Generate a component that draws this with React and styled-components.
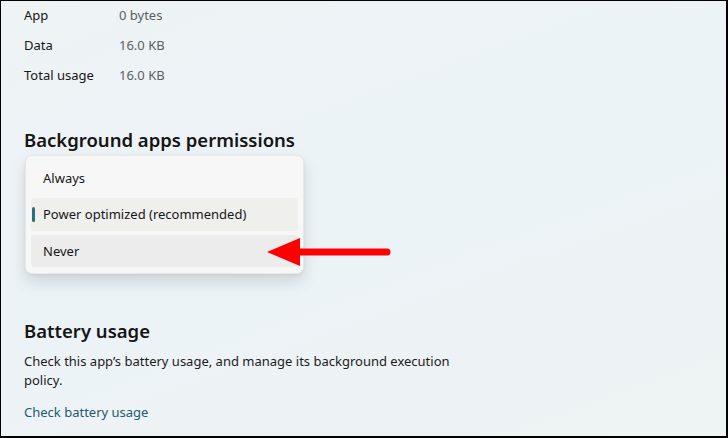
import React from "react";
import styled, { createGlobalStyle } from "styled-components";

const GlobalStyle = createGlobalStyle`
  html, body {
    margin: 0;
    padding: 0;
  }
  body {
    font-family: "Noto Sans", "Open Sans", sans-serif;
    -webkit-font-smoothing: antialiased;
  }
`;

const storage = [
  { label: "App", value: "0 bytes" },
  { label: "Data", value: "16.0 KB" },
  { label: "Total usage", value: "16.0 KB" },
];

const options = [
  { text: "Always" },
  { text: "Power optimized (recommended)", selected: true },
  { text: "Never", hover: true },
];

function App() {
  return (
    <>
      <GlobalStyle />
      <Frame>
        <StorageList>
          {storage.map((row) => (
            <StorageRow key={row.label}>
              <Label>{row.label}</Label>
              <Value>{row.value}</Value>
            </StorageRow>
          ))}
        </StorageList>

        <Heading $top={37}>Background apps permissions</Heading>
        <PermissionBody>
          <Menu>
            {options.map((o) => (
              <MenuItem key={o.text} $selected={o.selected} $hover={o.hover}>
                {o.selected && <Accent />}
                {o.text}
              </MenuItem>
            ))}
          </Menu>
          <Arrow width="128" height="32" viewBox="0 0 128 32">
            <polygon points="1,16 34,2 34,30" fill="#ff0000" />
            <line x1="32" y1="16" x2="121" y2="16" stroke="#ff0000" strokeWidth="7" strokeLinecap="round" />
          </Arrow>
        </PermissionBody>

        <Heading $top={0}>Battery usage</Heading>
        <Description>
          Check this app’s battery usage, and manage its background execution
          policy.
        </Description>
        <LinkText>Check battery usage</LinkText>
      </Frame>
    </>
  );
}

const Frame = styled.div`
  box-sizing: border-box;
  width: 728px;
  height: 438px;
  overflow: hidden;
  border-style: solid;
  border-color: #000;
  border-width: 1px 2px 2px 1px;
  padding: 0 0 0 23px;
  background: linear-gradient(160deg, #eef3f5 0%, #ecf3f7 45%, #eef3f3 100%);
  color: #1b1b1b;
  display: flex;
  flex-direction: column;
`;

const StorageList = styled.div`
  display: flex;
  flex-direction: column;
  margin-top: -1px;
`;

const StorageRow = styled.div`
  display: flex;
  align-items: center;
  height: 30px;
  font-size: 13px;
`;

const Label = styled.span`
  width: 95px;
  color: #161616;
`;

const Value = styled.span`
  color: #5c5f61;
`;

const Heading = styled.h2`
  margin: ${(p) => p.$top}px 0 0 0;
  font-size: 18.5px;
  font-weight: 600;
  line-height: 26px;
  color: #151515;
`;

const PermissionBody = styled.div`
  position: relative;
  height: 165px;
`;

const Menu = styled.div`
  position: absolute;
  top: 2px;
  left: 1px;
  box-sizing: border-box;
  width: 279px;
  height: 119px;
  padding: 6px 5px;
  background: #f6f7f6;
  border: 1px solid rgba(0, 0, 0, 0.06);
  border-radius: 7px;
  box-shadow: 0 8px 16px rgba(0, 0, 0, 0.13), 0 1px 3px rgba(0, 0, 0, 0.06);
  display: flex;
  flex-direction: column;
  gap: 4px;
`;

const MenuItem = styled.div`
  position: relative;
  height: 33px;
  display: flex;
  align-items: center;
  padding-left: 12px;
  border-radius: 4px;
  font-size: 13px;
  color: #161616;
  background: ${(p) => (p.$hover ? "#ebeceb" : p.$selected ? "#efefee" : "transparent")};
`;

const Accent = styled.span`
  position: absolute;
  left: 1px;
  top: 9px;
  width: 3px;
  height: 15px;
  border-radius: 2px;
  background: #2b6e7e;
`;

const Arrow = styled.svg`
  position: absolute;
  left: 242px;
  top: 83px;
`;

const Description = styled.p`
  margin: 8px 0 0 0;
  width: 450px;
  font-size: 13px;
  line-height: 19px;
  color: #1c1c1c;
`;

const LinkText = styled.a`
  margin-top: 13px;
  font-size: 13px;
  color: #1d5b6c;
  cursor: pointer;
`;

export default App;
